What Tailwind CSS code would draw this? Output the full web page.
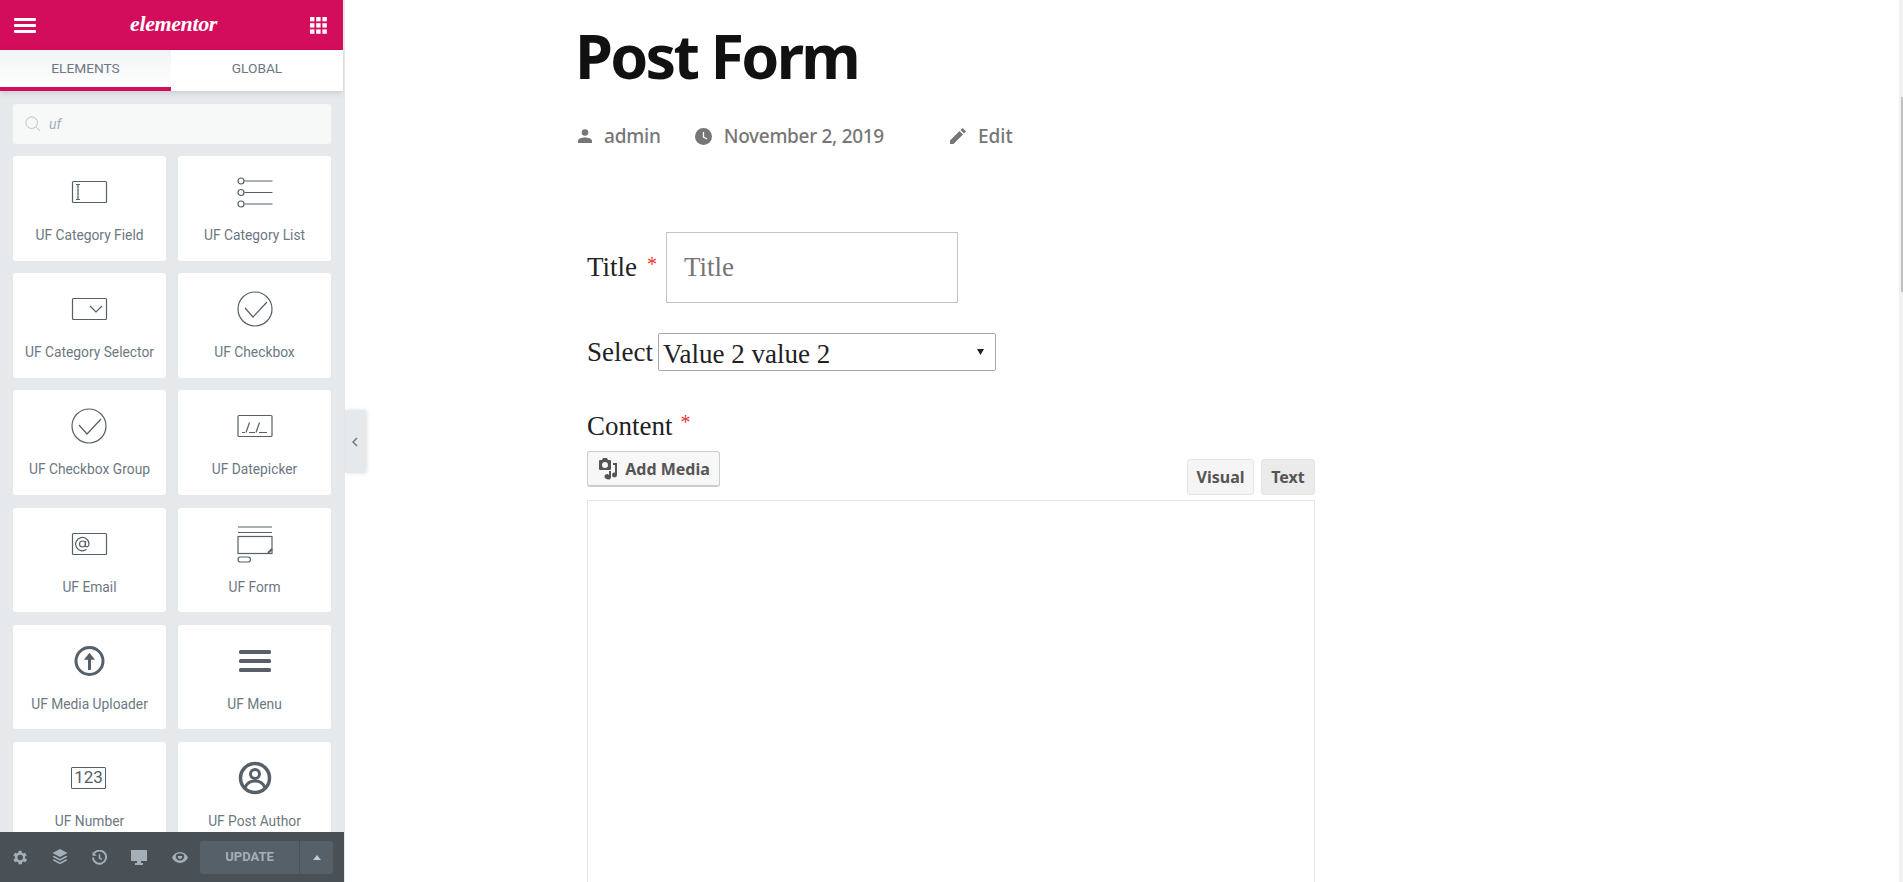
<!DOCTYPE html>
<html lang="en">
<head>
  <meta charset="UTF-8">
  <meta name="viewport" content="width=device-width, initial-scale=1.0">
  <title>Post Form</title>
  <script src="https://cdn.jsdelivr.net/npm/@tailwindcss/browser@4"></script>
</head>
<body class="bg-white h-[882px] overflow-hidden font-['Roboto',sans-serif]">
  <div class="flex h-[882px] relative">

    <!-- Sidebar -->
    <aside class="w-[345px] shrink-0 h-full bg-[#e6e9ec] flex flex-col relative">
      <div class="w-[344px] h-full flex flex-col overflow-hidden">
        <header class="w-[343px] h-[50px] shrink-0 bg-[#d30c5c] flex items-center justify-between pl-[14px] pr-[16px]">
          <svg width="23" height="15" viewBox="0 0 23 15" fill="#fff"><rect y="0" width="22" height="3" rx="1"/><rect y="6" width="22" height="3" rx="1"/><rect y="12" width="22" height="3" rx="1"/></svg>
          <span class="text-white text-[22px] leading-none italic font-bold font-['Liberation_Serif',serif] tracking-[-0.4px] -mt-[2px]">elementor</span>
          <svg width="17" height="17" viewBox="0 0 17 17" fill="#fff"><rect x="0" y="0" width="4.4" height="4.4"/><rect x="6.2" y="0" width="4.4" height="4.4"/><rect x="12.4" y="0" width="4.4" height="4.4"/><rect x="0" y="6.2" width="4.4" height="4.4"/><rect x="6.2" y="6.2" width="4.4" height="4.4"/><rect x="12.4" y="6.2" width="4.4" height="4.4"/><rect x="0" y="12.4" width="4.4" height="4.4"/><rect x="6.2" y="12.4" width="4.4" height="4.4"/><rect x="12.4" y="12.4" width="4.4" height="4.4"/></svg>
        </header>
        <nav class="w-[343px] h-[41px] shrink-0 flex bg-white shadow-[0_2px_6px_rgba(0,0,0,0.12)] text-[13.7px] text-[#6d7882] uppercase relative">
          <div class="w-[171px] flex items-center justify-center border-b-[4px] border-[#d30c5c] bg-gradient-to-b from-[#f1f3f5] to-white">Elements</div>
          <div class="flex-1 flex items-center justify-center pb-[4px]">Global</div>
        </nav>

        <div class="flex-1 min-h-0 overflow-hidden px-[13px] pt-[13px]">
          <div class="w-[318px] h-[40px] bg-[#f7f8f8] rounded-[3px] flex items-center pl-[12px] gap-[8px]">
            <svg width="16" height="16" viewBox="0 0 18 18" fill="none" stroke="#b9c0c6" stroke-width="1.1"><circle cx="7.5" cy="7.5" r="6.5"/><path d="M12.5 12.5L17 17"/></svg>
            <span class="text-[14px] italic text-[#a4afb7]">uf</span>
          </div>

          <div class="grid grid-cols-[153px_153px] gap-x-[12px] gap-y-[12.5px] mt-[12px] text-[#6d7882]">

            <div class="h-[104.7px] bg-white rounded-[3px] flex flex-col items-center pt-[16px]">
              <svg width="40" height="40" viewBox="0 0 40 40" fill="none" stroke="#556068" stroke-width="1.2"><rect x="2.5" y="9.5" width="34" height="21" rx="1"/><path d="M8 12.5v15M6 12.5h4M6 27.5h4"/></svg>
              <span class="text-[13.8px] leading-4 mt-[15px]">UF Category Field</span>
            </div>
            <div class="h-[104.7px] bg-white rounded-[3px] flex flex-col items-center pt-[16px]">
              <svg width="40" height="40" viewBox="0 0 40 40" fill="none" stroke="#556068" stroke-width="1.2"><circle cx="6" cy="9" r="3"/><circle cx="6" cy="20.500" r="3"/><circle cx="6" cy="32" r="3"/><path d="M9.500 9h28M9.500 20.500h28M9.500 32h28"/></svg>
              <span class="text-[13.8px] leading-4 mt-[15px]">UF Category List</span>
            </div>

            <div class="h-[104.7px] bg-white rounded-[3px] flex flex-col items-center pt-[16px]">
              <svg width="40" height="40" viewBox="0 0 40 40" fill="none" stroke="#556068" stroke-width="1.2"><rect x="2.5" y="9.5" width="34" height="21" rx="1"/><path d="M20 17l6 6 6-6"/></svg>
              <span class="text-[13.8px] leading-4 mt-[15px]">UF Category Selector</span>
            </div>
            <div class="h-[104.7px] bg-white rounded-[3px] flex flex-col items-center pt-[16px]">
              <svg width="40" height="40" viewBox="0 0 40 40" fill="none" stroke="#556068" stroke-width="1.2"><circle cx="20" cy="20" r="17"/><path d="M10 19l8 9 14-15"/></svg>
              <span class="text-[13.8px] leading-4 mt-[15px]">UF Checkbox</span>
            </div>

            <div class="h-[104.7px] bg-white rounded-[3px] flex flex-col items-center pt-[16px]">
              <svg width="40" height="40" viewBox="0 0 40 40" fill="none" stroke="#556068" stroke-width="1.2"><circle cx="19" cy="20" r="17"/><path d="M9 19l8 9 14-15"/></svg>
              <span class="text-[13.8px] leading-4 mt-[15px]">UF Checkbox Group</span>
            </div>
            <div class="h-[104.7px] bg-white rounded-[3px] flex flex-col items-center pt-[16px]">
              <svg width="40" height="40" viewBox="0 0 40 40" fill="none" stroke="#556068" stroke-width="1.2"><rect x="3" y="9.5" width="34" height="21" rx="1"/><path d="M7 26.5h3M11 26.5l3.500-10M14 26.500h6M21 26.500l3.500-10M24 26.500h8"/></svg>
              <span class="text-[13.8px] leading-4 mt-[15px]">UF Datepicker</span>
            </div>

            <div class="h-[104.7px] bg-white rounded-[3px] flex flex-col items-center pt-[16px]">
              <svg width="40" height="40" viewBox="0 0 40 40" fill="none" stroke="#556068" stroke-width="1.2"><rect x="2.5" y="9.500" width="34" height="21" rx="1"/><circle cx="12.500" cy="20" r="3"/><path d="M15.500 17v4.500c0 2 3.500 2 3.500-1.500a6.700 6.700 0 1 0-2.500 5.300"/></svg>
              <span class="text-[13.8px] leading-4 mt-[15px]">UF Email</span>
            </div>
            <div class="h-[104.7px] bg-white rounded-[3px] flex flex-col items-center pt-[16px]">
              <svg width="40" height="40" viewBox="0 0 40 40" fill="none" stroke="#556068" stroke-width="1.2"><path d="M3 3h34M3 8.500h34"/><rect x="3" y="12.500" width="34" height="17"/><path d="M33 29l4-4" stroke-width="2"/><rect x="3" y="33" width="12.500" height="5" rx="2.500"/></svg>
              <span class="text-[13.8px] leading-4 mt-[15px]">UF Form</span>
            </div>

            <div class="h-[104.7px] bg-white rounded-[3px] flex flex-col items-center pt-[16px]">
              <svg width="40" height="40" viewBox="0 0 40 40" fill="none" stroke="#556068" stroke-width="3"><circle cx="19.500" cy="20" r="13.500"/><path d="M19.500 29V14" stroke-width="3"/><path d="M15.500 18l4-5 4 5z" fill="#556068" stroke-width="1.500"/></svg>
              <span class="text-[13.8px] leading-4 mt-[15px]">UF Media Uploader</span>
            </div>
            <div class="h-[104.7px] bg-white rounded-[3px] flex flex-col items-center pt-[16px]">
              <svg width="40" height="40" viewBox="0 0 40 40" fill="#556068"><rect x="4" y="9" width="32" height="4" rx="1.500"/><rect x="4" y="18" width="32" height="4" rx="1.500"/><rect x="4" y="27" width="32" height="4" rx="1.500"/></svg>
              <span class="text-[13.8px] leading-4 mt-[15px]">UF Menu</span>
            </div>

            <div class="h-[104.7px] bg-white rounded-[3px] flex flex-col items-center pt-[16px]">
              <div class="w-[35px] h-[22px] -translate-x-[1px] border border-[#556068] rounded-[1px] flex items-center justify-center text-[17px] leading-none text-[#556068] my-[9px]">123</div>
              <span class="text-[13.8px] leading-4 mt-[15px]">UF Number</span>
            </div>
            <div class="h-[104.7px] bg-white rounded-[3px] flex flex-col items-center pt-[16px]">
              <svg width="40" height="40" viewBox="0 0 40 40" fill="none" stroke="#556068" stroke-width="3.500"><circle cx="20" cy="20" r="14.500"/><circle cx="20" cy="16" r="4.500" stroke-width="3"/><path d="M10 30c2-6 6-7 10-7s8 1 10 7" stroke-width="3"/></svg>
              <span class="text-[13.8px] leading-4 mt-[15px]">UF Post Author</span>
            </div>
          </div>
        </div>

        <footer class="h-[50px] shrink-0 bg-[#495157] flex items-center relative">
          <div class="w-[200px] flex items-center justify-around text-[#a4afb7]">
            <svg class="w-[15px] h-[15px]" viewBox="3 2.500 19 19" fill="#a4afb7"><path d="M19.400 13a7.500 7.500 0 0 0 0-2l2.100-1.600-2-3.500-2.500 1a7.500 7.500 0 0 0-1.700-1L15.400 3.300h-4l-.4 2.600a7.500 7.500 0 0 0-1.700 1l-2.500-1-2 3.500L6.900 11a7.500 7.500 0 0 0 0 2l-2.100 1.600 2 3.500 2.500-1a7.500 7.500 0 0 0 1.700 1l.4 2.600h4l.4-2.600a7.500 7.500 0 0 0 1.700-1l2.500 1 2-3.500zM13.400 15.500a3.500 3.500 0 1 1 0-7 3.500 3.500 0 0 1 0 7z"/></svg>
            <svg class="w-[16px] h-[16px]" viewBox="0 0 16 16" fill="#a4afb7"><path d="M8 0l7.500 4L8 8 .5 4zM2 6.800L8 10l6-3.200 1.500 1L8 11.800.5 7.800zM2 10.300L8 13.500l6-3.200 1.500 1L8 15.300.5 11.300z"/></svg>
            <svg class="w-[15px] h-[15px]" viewBox="0 0 16 16" fill="none" stroke="#a4afb7" stroke-width="2"><path d="M2.300 3.500A7 7 0 1 1 1 8"/><path d="M8 4.500V8.500l2.500 1.500" stroke-width="1.600"/><path d="M.5 1.500v4.500h4.500z" fill="#a4afb7" stroke="none"/></svg>
            <svg class="w-[16px] h-[15px]" viewBox="0 0 16 15" fill="#a4afb7"><path d="M0 0h16v11H0zM6 11h4v2h2v2H4v-2h2z"/></svg>
            <svg class="w-[16px] h-[11px]" viewBox="0 0 16 11" fill="#a4afb7"><path d="M8 0c3.500 0 6.500 2.200 8 5.500-1.500 3.300-4.500 5.500-8 5.500S1.500 8.800 0 5.500C1.500 2.200 4.500 0 8 0zm0 1.200a6.300 6.300 0 0 0-4 1.500 4.300 4.300 0 1 0 8 0 6.300 6.300 0 0 0-4-1.500zM6 4a2.200 2.200 0 1 0 4 0z"/></svg>
          </div>
          <div class="w-[133px] h-[33px] bg-[#556068] rounded-[3px] flex text-[#a4afb7]">
            <div class="w-[100px] flex items-center justify-center border-r border-[#495157] text-[13px] font-bold uppercase">Update</div>
            <div class="flex-1 flex items-center justify-center">
              <svg width="8" height="5" viewBox="0 0 8 5" fill="#c2cbd2"><path d="M0 5l4-5 4 5z"/></svg>
            </div>
          </div>
        </footer>
      </div>
      <!-- Collapse handle -->
      <button class="absolute left-[345px] top-[410px] w-[20px] h-[63px] bg-[#e6e9ec] shadow-[2px_0_4px_rgba(0,0,0,0.12)] flex items-center justify-center">
        <svg width="6" height="10" viewBox="0 0 6 10" fill="none" stroke="#6d7882" stroke-width="1.500"><path d="M5 1L1 5l4 4"/></svg>
      </button>
    </aside>

    <!-- Page -->
    <main class="flex-1 min-w-0 pl-[233px] overflow-hidden">
      <h1 class="text-[61px] leading-[80px] font-bold text-[#111] font-['Noto_Sans',sans-serif] tracking-[-2.7px] -ml-[3px] mt-[16px]">Post Form</h1>
      <div class="flex items-center text-[19px] leading-7 font-medium text-[#767676] font-['Noto_Sans',sans-serif] mt-[26px]">
        <svg class="w-[14px] h-[14px] mr-[12px]" viewBox="0 0 14 14" fill="#767676"><circle cx="7" cy="3.500" r="3.300"/><path d="M0 14v-2c0-2.500 4-3.500 7-3.500s7 1 7 3.500v2z"/></svg>
        <span class="tracking-[-0.2px]">admin</span>
        <svg class="w-[17px] h-[17px] ml-[34px] mr-[12px]" viewBox="0 0 17 17"><circle cx="8.500" cy="8.500" r="8.500" fill="#767676"/><path d="M8.500 4v5l3.500 2" fill="none" stroke="#fff" stroke-width="1.300"/></svg>
        <span class="tracking-[-0.3px]">November 2, 2019</span>
        <svg class="w-[16px] h-[16px] ml-[66px] mr-[12px]" viewBox="0 0 16 16" fill="#767676"><path d="M0 16v-3.500L9.500 3 13 6.500 3.500 16zM10.500 2L12.500 0 16 3.500 14 5.500z"/></svg>
        <span>Edit</span>
      </div>

      <form class="pl-[9px] font-['Liberation_Serif',serif] text-[27px] text-[#222] mt-[82px]">
        <div class="flex items-center h-[71px]">
          <label>Title</label>
          <span class="text-[#f03030] text-[20px] ml-[10px] mr-[9px] -mt-2">*</span>
          <input type="text" placeholder="Title" class="w-[292px] h-[71px] border border-[#c4c4c4] pl-[17px] placeholder:text-[#757575] outline-none">
        </div>
        <div class="flex items-center mt-[30px] h-[38px]">
          <label class="mr-[5px]">Select</label>
          <div class="relative">
            <select class="block appearance-none w-[338px] h-[38px] border border-[#a6a6a6] rounded-[2px] pl-[4px] pb-[2px] bg-white">
              <option>Value 2 value 2</option>
            </select>
            <svg class="absolute right-[12px] top-[16px] pointer-events-none" width="7" height="6" viewBox="0 0 7 6" fill="#222"><path d="M0 0h7L3.500 6z"/></svg>
          </div>
        </div>
        <div class="mt-[38px] h-[34px] flex items-center">
          <label>Content</label>
          <span class="text-[#f03030] text-[20px] ml-[8px] -mt-2">*</span>
        </div>
        <div class="w-[728px] mt-[8px] flex items-end justify-between font-['Noto_Sans',sans-serif]">
          <button type="button" class="w-[133px] h-[36px] mb-[8px] flex items-center justify-center gap-[6px] bg-[#f7f7f7] border border-[#ccc] border-b-[2px] rounded-[3px] text-[16px] font-bold text-[#555]">
            <svg width="22" height="22" viewBox="0 0 22 22" fill="#555"><path d="M3 2h2l1-2h4l1 2h2a1 1 0 0 1 1 1v8a1 1 0 0 1-1 1H3a1 1 0 0 1-1-1V3a1 1 0 0 1 1-1zm5 2a3 3 0 1 0 0 6 3 3 0 0 0 0-6z"/><path d="M16 5h4v12a2.500 2.500 0 1 1-2-2.400V7h-2zM10 21a2.500 2.500 0 1 1 2-4v-4h2v5.500a2.500 2.500 0 0 1-4 2.500z" /></svg>
            Add Media
          </button>
          <div class="flex gap-[7px] text-[16px] font-bold text-[#555]">
            <div class="w-[67px] h-[36px] bg-[#f5f5f5] border border-[#e5e5e5] rounded-[3px] flex items-center justify-center">Visual</div>
            <div class="w-[54px] h-[36px] bg-[#ebebeb] border border-[#e5e5e5] rounded-[3px] flex items-center justify-center">Text</div>
          </div>
        </div>
        <div class="w-[728px] h-[500px] mt-[5px] border border-[#e5e5e5] bg-white"></div>
      </form>
    </main>

    <!-- Page scrollbar -->
    <div class="w-[4px] shrink-0 h-full bg-[#f1f1f1] flex justify-end">
      <div class="w-[2px] h-[195px] mt-[97px] bg-[#c1c1c1]"></div>
    </div>
  </div>
</body>
</html>
